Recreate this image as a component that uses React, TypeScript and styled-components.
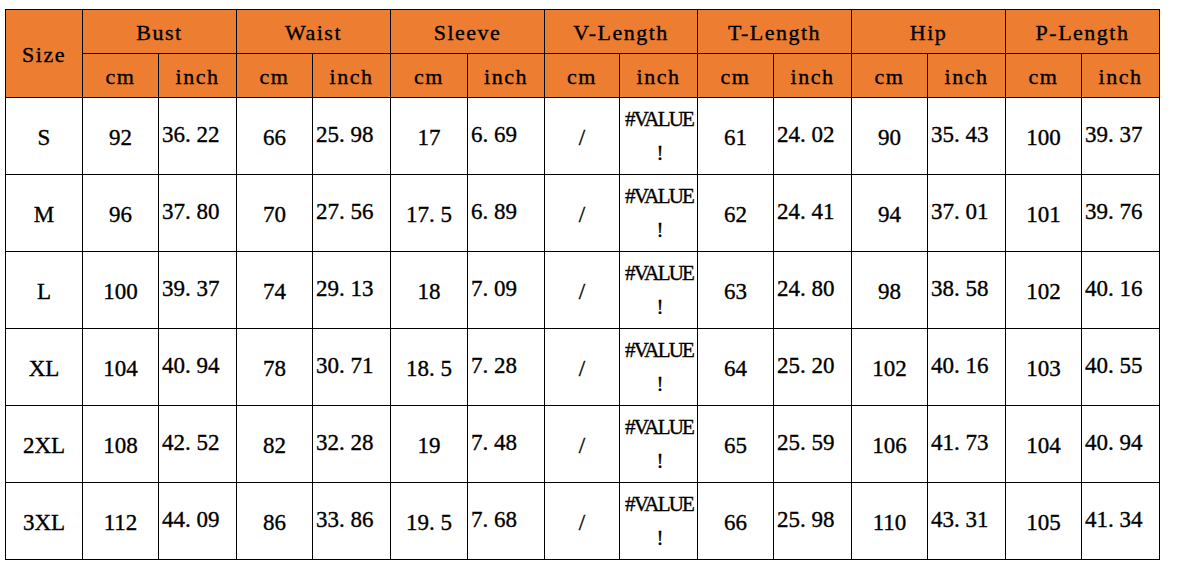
import React from "react";
import styled, { createGlobalStyle } from "styled-components";

const Global = createGlobalStyle`
  html, body { margin: 0; padding: 0; background: #ffffff; }
  body { font-family: "Liberation Serif", "Times New Roman", serif; color: #000; }
`;

const Page = styled.div`
  padding: 9px 0 0 5px;
`;

const Table = styled.table`
  border-collapse: collapse;
  table-layout: fixed;
  width: 1154px;
`;

const HeadCell = styled.th<{ $h: number }>`
  background: #ed7d31;
  border: 1.5px solid #000;
  height: ${(p) => p.$h}px;
  padding: 2px 0 0 0;
  font-family: "Liberation Serif", "Times New Roman", serif;
  font-weight: normal;
  font-size: 22px;
  letter-spacing: 1.5px;
  text-align: center;
  vertical-align: middle;
  line-height: 1;
  -webkit-text-stroke: 0.35px #000;
`;

const Cell = styled.td<{ $left?: boolean }>`
  border: 1.5px solid #000;
  height: 72px;
  padding: ${(p) => (p.$left ? "0 0 4px 3px" : "3px 0 1px 0")};
  font-size: 23px;
  text-align: ${(p) => (p.$left ? "left" : "center")};
  vertical-align: middle;
  line-height: 1;
  white-space: nowrap;
  -webkit-text-stroke: 0.35px #000;
`;

const ErrorText = styled.div`
  font-size: 21px;
  letter-spacing: -1.8px;
  line-height: 34px;
  text-align: center;
  padding-left: 1px;
  margin-top: -3px;
`;

const Dot = styled.span`
  display: inline-block;
  width: 0.5em;
  text-align: left;
`;

const widths = [77, 76, 78, 76, 78, 77, 77, 75, 78, 76, 78, 76, 78, 76, 78];

const groups = ["Bust", "Waist", "Sleeve", "V-Length", "T-Length", "Hip", "P-Length"];

type Row = { size: string; vals: string[] };

const rows: Row[] = [
  { size: "S", vals: ["92", "36.22", "66", "25.98", "17", "6.69", "/", "#", "61", "24.02", "90", "35.43", "100", "39.37"] },
  { size: "M", vals: ["96", "37.80", "70", "27.56", "17.5", "6.89", "/", "#", "62", "24.41", "94", "37.01", "101", "39.76"] },
  { size: "L", vals: ["100", "39.37", "74", "29.13", "18", "7.09", "/", "#", "63", "24.80", "98", "38.58", "102", "40.16"] },
  { size: "XL", vals: ["104", "40.94", "78", "30.71", "18.5", "7.28", "/", "#", "64", "25.20", "102", "40.16", "103", "40.55"] },
  { size: "2XL", vals: ["108", "42.52", "82", "32.28", "19", "7.48", "/", "#", "65", "25.59", "106", "41.73", "104", "40.94"] },
  { size: "3XL", vals: ["112", "44.09", "86", "33.86", "19.5", "7.68", "/", "#", "66", "25.98", "110", "43.31", "105", "41.34"] },
];

function Num({ v }: { v: string }) {
  const i = v.indexOf(".");
  if (i < 0) return <>{v}</>;
  return (
    <>
      {v.slice(0, i)}
      <Dot>.</Dot>
      {v.slice(i + 1)}
    </>
  );
}

export default function App() {
  return (
    <>
      <Global />
      <Page>
        <Table>
          <colgroup>
            {widths.map((w, i) => (
              <col key={i} style={{ width: w }} />
            ))}
          </colgroup>
          <thead>
            <tr>
              <HeadCell $h={41} rowSpan={2}>Size</HeadCell>
              {groups.map((g) => (
                <HeadCell $h={41} key={g} colSpan={2}>
                  {g}
                </HeadCell>
              ))}
            </tr>
            <tr>
              {groups.map((g) => (
                <React.Fragment key={g}>
                  <HeadCell $h={41}>cm</HeadCell>
                  <HeadCell $h={41}>inch</HeadCell>
                </React.Fragment>
              ))}
            </tr>
          </thead>
          <tbody>
            {rows.map((r) => (
              <tr key={r.size}>
                <Cell>{r.size}</Cell>
                {r.vals.map((v, i) =>
                  v === "#" ? (
                    <Cell key={i}>
                      <ErrorText>
                        #VALUE
                        <br />!
                      </ErrorText>
                    </Cell>
                  ) : (
                    <Cell key={i} $left={i % 2 === 1}>
                      <Num v={v} />
                    </Cell>
                  )
                )}
              </tr>
            ))}
          </tbody>
        </Table>
      </Page>
    </>
  );
}
